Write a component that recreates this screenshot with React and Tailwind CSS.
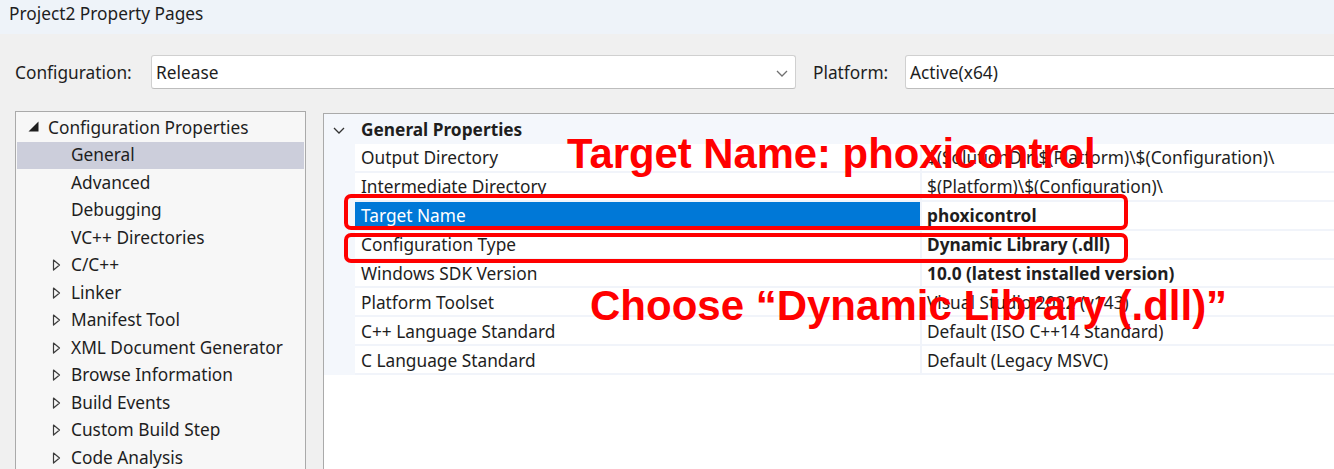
import React from "react";

const FONT = { fontFamily: '"Noto Sans", "Open Sans", sans-serif' };

function FilledTri() {
  return (
    <svg width="11" height="11" viewBox="0 0 11 11" className="shrink-0">
      <polygon points="10.5,0.5 10.5,10.5 0.5,10.5" fill="#1e1e1e" />
    </svg>
  );
}

function OutlineTri() {
  return (
    <svg width="9" height="12" viewBox="0 0 9 12" className="shrink-0">
      <polygon points="1.5,1 7.5,6 1.5,11" fill="none" stroke="#3c3c3c" strokeWidth="1.2" strokeLinejoin="round" />
    </svg>
  );
}

function Chevron({ w = 12, h = 7, color = "#3c3c3c" }) {
  return (
    <svg width={w} height={h} viewBox="0 0 12 7" className="shrink-0">
      <polyline points="1,1 6,6 11,1" fill="none" stroke={color} strokeWidth="1.3" />
    </svg>
  );
}

const treeChildren = ["General", "Advanced", "Debugging", "VC++ Directories"];
const treeGroups = [
  "C/C++",
  "Linker",
  "Manifest Tool",
  "XML Document Generator",
  "Browse Information",
  "Build Events",
  "Custom Build Step",
  "Code Analysis",
];

const props = [
  ["Output Directory", "$(SolutionDir)$(Platform)\\$(Configuration)\\", false],
  ["Intermediate Directory", "$(Platform)\\$(Configuration)\\", false],
  ["Target Name", "phoxicontrol", true, true],
  ["Configuration Type", "Dynamic Library (.dll)", true],
  ["Windows SDK Version", "10.0 (latest installed version)", true],
  ["Platform Toolset", "Visual Studio 2022 (v143)", false],
  ["C++ Language Standard", "Default (ISO C++14 Standard)", false],
  ["C Language Standard", "Default (Legacy MSVC)", false],
];

export default function App() {
  return (
    <div
      className="relative w-[1334px] h-[469px] overflow-hidden flex flex-col bg-[#f0f0f0] text-[#1e1e1e]"
      style={FONT}
    >
      {/* Title bar */}
      <div className="h-[34px] shrink-0 bg-[#eef3f9] flex items-center pl-[9px] text-[17.3px] leading-none pb-[9px] pt-[2px]">
        Project2 Property Pages
      </div>

      {/* Configuration row */}
      <div className="mt-[21px] flex items-center pl-[15px] h-[34px] shrink-0 text-[17.3px]">
        <div className="w-[136px] shrink-0 pt-[2px]">Configuration:</div>
        <div className="w-[645px] shrink-0 h-[34px] bg-white border border-[#d0d0d0] border-b-[#bdbdbd] rounded-[3px] flex items-center justify-between pl-[4px] pr-[7px] pt-[2px]">
          <span>Release</span>
          <Chevron w={12} h={7} color="#707070" />
        </div>
        <div className="ml-[17px] w-[92px] shrink-0 pt-[2px]">Platform:</div>
        <div className="w-[440px] shrink-0 h-[34px] bg-white border border-[#d0d0d0] border-b-[#bdbdbd] rounded-[3px] flex items-center pl-[4px] pt-[2px]">
          <span>Active(x64)</span>
        </div>
      </div>

      {/* Content */}
      <div className="mt-[22px] flex flex-1 min-h-0">
        {/* Tree */}
        <div className="ml-[15px] w-[291px] shrink-0 h-[400px] border border-[#aaaaaa] bg-[#f7f7f7] pt-[2px] px-[1px] text-[17.3px]">
          <div className="h-[27.5px] flex items-center">
            <div className="w-[31px] flex justify-end pr-[9px] pb-[2px]">
              <FilledTri />
            </div>
            <span>Configuration Properties</span>
          </div>
          {treeChildren.map((t, i) => (
            <div
              key={t}
              className={
                "h-[27.5px] flex items-center pl-[54px] " + (i === 0 ? "bg-[#cccedb]" : "")
              }
            >
              {t}
            </div>
          ))}
          {treeGroups.map((t) => (
            <div key={t} className="h-[27.5px] flex items-center">
              <div className="w-[54px] flex pl-[35px]">
                <OutlineTri />
              </div>
              <span>{t}</span>
            </div>
          ))}
        </div>

        {/* Property grid */}
        <div className="ml-[17px] mt-[2px] flex-1 border-l border-t border-[#aaaaaa] flex flex-col text-[17.3px]">
          <div className="bg-[#f4f7fc]">
            <div className="h-[30px] flex items-center pt-[2px]">
              <div className="w-[37px] flex pl-[9px]">
                <Chevron w={12} h={7} color="#333333" />
              </div>
              <span className="font-bold">General Properties</span>
            </div>
            <div className="ml-[31px] bg-white">
              {props.map(([name, value, bold, selected]) => (
                <div key={name} className="h-[28.9px] flex border-b-2 border-[#f1f4fa]">
                  <div
                    className={
                      "w-[565px] shrink-0 flex items-center pl-[6px] pt-[2px] " +
                      (selected ? "bg-[#0078d7] text-white" : "")
                    }
                  >
                    {name}
                  </div>
                  <div
                    className={
                      "flex-1 flex items-center pl-[5px] pt-[2px] border-l-2 border-[#f1f4fa] whitespace-nowrap " +
                      (bold ? "font-bold" : "")
                    }
                  >
                    {value}
                  </div>
                </div>
              ))}
            </div>
          </div>
          <div className="flex-1 bg-white" />
        </div>
      </div>

      {/* Annotations */}
      <div
        className="absolute left-[567px] top-[133px] text-[41.8px] leading-[41px] font-bold text-[#ff0000] whitespace-nowrap"
        style={{ fontFamily: '"Liberation Sans", Arial, sans-serif' }}
      >
        Target Name: phoxicontrol
      </div>
      <div
        className="absolute left-[590px] top-[285px] text-[42px] leading-[41px] font-bold text-[#ff0000] whitespace-nowrap"
        style={{ fontFamily: '"Liberation Sans", Arial, sans-serif' }}
      >
        Choose “Dynamic Library (.dll)”
      </div>
      <div className="absolute left-[344px] top-[194px] w-[784px] h-[36px] border-4 border-[#ff0000] rounded-[7px]" />
      <div className="absolute left-[344px] top-[233px] w-[784px] h-[30px] border-4 border-[#ff0000] rounded-[7px]" />
    </div>
  );
}
